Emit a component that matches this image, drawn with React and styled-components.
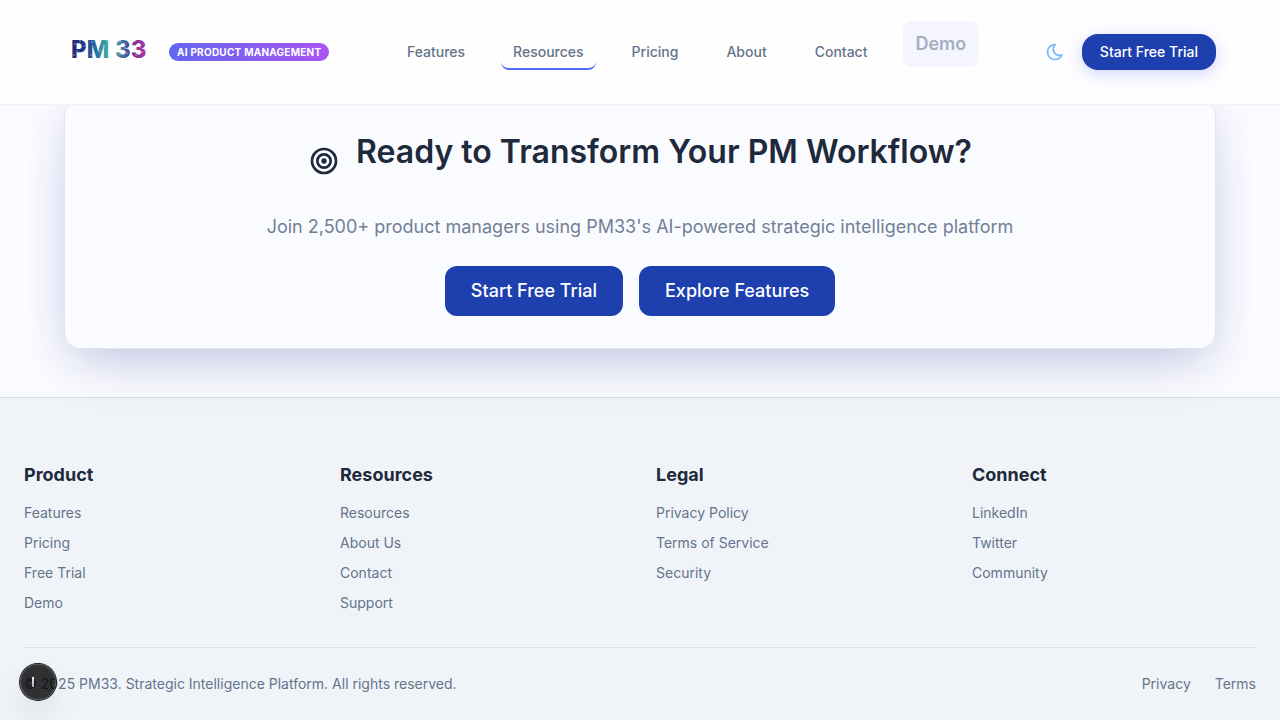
import React from 'react';
import styled, { createGlobalStyle, css } from 'styled-components';

const GlobalStyle = createGlobalStyle`
  *, *::before, *::after { box-sizing: border-box; }
  html, body, #root { min-height: 100vh; }
  body {
    margin: 0;
    background: #fafbff;
    color: #1e293b;
    font-family: Inter, 'Liberation Sans', sans-serif;
    font-size: 14px;
    line-height: 22px;
  }
  #root { display: flex; flex-direction: column; }
  h2, h3, p, ul { margin: 0; padding: 0; }
  ul { list-style: none; }
  a { color: inherit; text-decoration: none; }
  button { font: inherit; border: 0; cursor: pointer; }
`;

const Header = styled.header`
  position: sticky;
  top: 0;
  z-index: 10;
  display: flex;
  align-items: center;
  justify-content: space-between;
  height: 105px;
  padding: 0 64px;
  background: #fefeff;
  border-bottom: 1px solid #f0f0f5;
`;

const Brand = styled.a`
  display: flex;
  align-items: center;
  gap: 16px;
`;

const Logo = styled.svg`
  display: block;
  width: 89px;
  height: 32px;
  font-family: Inter, sans-serif;
  font-size: 24px;
  font-weight: 800;
`;

const Badge = styled.span`
  padding: 0 8px;
  border-radius: 9px;
  background: linear-gradient(90deg, #6366f1, #a855f7);
  color: #fff;
  font-size: 10px;
  font-weight: 700;
  line-height: 18px;
  letter-spacing: 0.025em;
  text-transform: uppercase;
  white-space: nowrap;
`;

const Nav = styled.nav`
  display: flex;
  align-items: center;
  gap: 24px;
`;

const NavLink = styled.a`
  padding: 6px 12px 5px;
  border-radius: 8px;
  border-bottom: 2px solid ${(p) => (p.$active ? '#4f6df5' : 'transparent')};
  border-top: 1px solid transparent;
  color: #64748b;
  font-weight: 500;
`;

const DemoLink = styled.a`
  align-self: flex-start;
  margin-bottom: 16px;
  padding: 12px;
  border-radius: 8px;
  background: #f5f5ff;
  color: #a4afbf;
  font-size: 18px;
  font-weight: 600;
`;

const Actions = styled.div`
  display: flex;
  align-items: center;
  gap: 16px;
`;

const IconButton = styled.button`
  display: flex;
  align-items: center;
  justify-content: center;
  width: 22px;
  height: 38px;
  padding: 0;
  background: transparent;
  color: #74b9f9;
`;

const Button = styled.button`
  background: #1e40af;
  color: #fff;
  font-weight: 500;
  white-space: nowrap;
  ${(p) =>
    p.$large
      ? css`
          height: 50px;
          padding: 0 26px;
          border-radius: 12px;
          font-size: 18px;
        `
      : css`
          height: 36px;
          padding: 0 18px;
          border-radius: 16px;
          font-size: 14px;
          box-shadow: 0 4px 16px rgba(79, 90, 240, 0.25);
        `}
`;

const Main = styled.main`
  margin-top: -5px;
  padding: 0 64px 48px;
`;

const CtaCard = styled.section`
  position: relative;
  z-index: 1;
  display: flex;
  flex-direction: column;
  align-items: center;
  padding: 24px 32px 32px;
  border: 1px solid #e2e4ec;
  border-radius: 16px;
  background: #fafbff;
  box-shadow: 0 25px 50px -12px rgba(30, 41, 120, 0.2), 0 0 40px rgba(79, 70, 229, 0.1);
  text-align: center;
`;

const CtaTitle = styled.h2`
  display: flex;
  align-items: flex-start;
  gap: 16px;
  font-size: 32px;
  font-weight: 600;
  line-height: 54px;
`;

const TargetIcon = styled.svg`
  flex: none;
  width: 32px;
  height: 32px;
  margin-top: 20px;
`;

const CtaText = styled.p`
  margin-top: 33px;
  color: #718096;
  font-size: 18px;
  line-height: 30px;
`;

const ButtonRow = styled.div`
  display: flex;
  flex-wrap: wrap;
  justify-content: center;
  gap: 16px;
  margin-top: 24px;
`;

const Footer = styled.footer`
  flex: 1 0 auto;
  padding: 64px 24px 24px;
  border-top: 1px solid #dadde3;
  background: #f0f4f9;
  color: #64748b;
`;

const Columns = styled.div`
  display: grid;
  grid-template-columns: repeat(4, minmax(0, 1fr));
  gap: 32px;
`;

const ColumnTitle = styled.h3`
  margin-bottom: 14px;
  color: #1e293b;
  font-size: 18px;
  font-weight: 700;
  line-height: 26px;
`;

const LinkList = styled.ul`
  display: grid;
  gap: 8px;
`;

const FooterBottom = styled.div`
  display: flex;
  justify-content: space-between;
  margin-top: 33px;
  padding-top: 25px;
  border-top: 1px solid #dce0e8;
`;

const LegalLinks = styled.div`
  display: flex;
  gap: 24px;
`;

const DevBadge = styled.button`
  position: fixed;
  left: 20px;
  bottom: 20px;
  z-index: 20;
  display: flex;
  align-items: center;
  justify-content: center;
  width: 36px;
  height: 36px;
  padding: 0 10px 0 0;
  border-radius: 50%;
  background: rgba(0, 0, 0, 0.8);
  box-shadow: 0 0 0 1px #171717, inset 0 0 0 1px rgba(255, 255, 255, 0.14), 0 16px 32px -8px rgba(0, 0, 0, 0.24);

  &::before {
    content: '';
    width: 2px;
    height: 10px;
    background: linear-gradient(#ededed, #a8a8a8);
  }
`;

const navItems = ['Features', 'Resources', 'Pricing', 'About', 'Contact'];

const footerColumns = [
  { title: 'Product', links: ['Features', 'Pricing', 'Free Trial', 'Demo'] },
  { title: 'Resources', links: ['Resources', 'About Us', 'Contact', 'Support'] },
  { title: 'Legal', links: ['Privacy Policy', 'Terms of Service', 'Security'] },
  { title: 'Connect', links: ['LinkedIn', 'Twitter', 'Community'] },
];

const speckles = [
  [11, 8], [16, 5], [21, 10], [13, 15], [10, 19], [28, 6], [29, 14], [33, 9],
  [36, 15], [40, 10], [43, 5], [45, 16], [56, 5], [61, 12], [63, 17], [56, 18],
  [71, 5], [76, 11], [78, 16], [72, 19], [27, 19],
];

function BrandLogo() {
  return (
    <Logo viewBox="0 0 89 32" role="img" aria-label="PM33">
      <defs>
        <linearGradient id="logoFill" gradientUnits="userSpaceOnUse" x1="8" y1="0" x2="81" y2="0">
          <stop offset="0" stopColor="#202a7c" />
          <stop offset="0.2" stopColor="#203c8c" />
          <stop offset="0.35" stopColor="#2878a6" />
          <stop offset="0.5" stopColor="#3fae9e" />
          <stop offset="0.62" stopColor="#3e96a6" />
          <stop offset="0.78" stopColor="#4c4a9e" />
          <stop offset="0.88" stopColor="#8c2c98" />
          <stop offset="1" stopColor="#a83aa6" />
        </linearGradient>
      </defs>
      <g fill="url(#logoFill)">
        <text x="7" y="22">PM</text>
        <text x="51" y="22">33</text>
      </g>
      <g fill="#fefeff" opacity="0.55">
        {speckles.map(([x, y]) => (
          <circle key={`${x}-${y}`} cx={x} cy={y} r="0.8" />
        ))}
      </g>
    </Logo>
  );
}

export default function App() {
  return (
    <>
      <GlobalStyle />
      <Header>
        <Brand href="#home">
          <BrandLogo />
          <Badge>AI Product Management</Badge>
        </Brand>
        <Nav aria-label="Main">
          {navItems.map((item) => (
            <NavLink key={item} href={`#${item.toLowerCase()}`} $active={item === 'Resources'}>
              {item}
            </NavLink>
          ))}
          <DemoLink href="#demo">Demo</DemoLink>
        </Nav>
        <Actions>
          <IconButton aria-label="Switch to dark mode">
            <svg width="20" height="20" viewBox="0 0 24 24" fill="none" stroke="currentColor" strokeWidth="2" strokeLinecap="round" strokeLinejoin="round">
              <path d="M12 3c.132 0 .263 0 .393 0a7.5 7.5 0 0 0 7.92 12.446a9 9 0 1 1 -8.313 -12.454z" />
            </svg>
          </IconButton>
          <Button>Start Free Trial</Button>
        </Actions>
      </Header>
      <Main>
        <CtaCard>
          <CtaTitle>
            <TargetIcon viewBox="0 0 24 24" fill="none" stroke="currentColor" strokeWidth="2" aria-hidden="true">
              <circle cx="12" cy="12" r="1" />
              <circle cx="12" cy="12" r="5" />
              <circle cx="12" cy="12" r="9" />
            </TargetIcon>
            Ready to Transform Your PM Workflow?
          </CtaTitle>
          <CtaText>Join 2,500+ product managers using PM33's AI-powered strategic intelligence platform</CtaText>
          <ButtonRow>
            <Button $large>Start Free Trial</Button>
            <Button $large>Explore Features</Button>
          </ButtonRow>
        </CtaCard>
      </Main>
      <Footer>
        <Columns>
          {footerColumns.map(({ title, links }) => (
            <div key={title}>
              <ColumnTitle>{title}</ColumnTitle>
              <LinkList>
                {links.map((link) => (
                  <li key={link}>
                    <a href={`#${link.toLowerCase().replace(/ /g, '-')}`}>{link}</a>
                  </li>
                ))}
              </LinkList>
            </div>
          ))}
        </Columns>
        <FooterBottom>
          <p>© 2025 PM33. Strategic Intelligence Platform. All rights reserved.</p>
          <LegalLinks>
            <a href="#privacy">Privacy</a>
            <a href="#terms">Terms</a>
          </LegalLinks>
        </FooterBottom>
      </Footer>
      <DevBadge aria-label="Open developer tools" />
    </>
  );
}
